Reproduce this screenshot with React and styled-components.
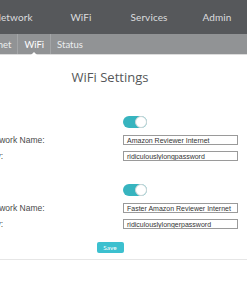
import React from "react";
import styled, { createGlobalStyle } from "styled-components";

const Global = createGlobalStyle`
  html, body { margin: 0; padding: 0; background: #ffffff; }
  body { width: 247px; height: 296px; overflow: hidden; font-family: "Liberation Sans", Arial, sans-serif; }
`;

const Page = styled.div`
  width: 247px;
  height: 296px;
  overflow: hidden;
  background: #fff;
`;

const TopBar = styled.nav`
  height: 34px;
  background: #56585b;
  display: flex;
  align-items: center;
  margin-left: -21px;
`;

const TopItem = styled.div`
  flex: 0 0 68px;
  text-align: center;
  color: #dcdddf;
  font-family: Lato, "Open Sans", sans-serif;
  font-size: 10px;
  letter-spacing: 0.1px;
`;

const SubBar = styled.div`
  height: 20px;
  background: #919395;
  display: flex;
  align-items: center;
  border-bottom: 1px solid #dcdcdc;
  margin-left: -28px;
`;

const SubItem = styled.div`
  position: relative;
  height: 20px;
  display: flex;
  align-items: center;
  padding: 0 6px;
  color: ${(p) => (p.$active ? "#ffffff" : "#eceeef")};
  font-family: Lato, "Open Sans", sans-serif;
  font-size: 9.5px;
  & + & { border-left: 1px solid #a3a5a7; }
`;

const Notch = styled.span`
  position: absolute;
  left: 50%;
  bottom: -1px;
  margin-left: -3px;
  width: 0;
  height: 0;
  border-left: 3px solid transparent;
  border-right: 3px solid transparent;
  border-bottom: 3px solid #ffffff;
`;

const Title = styled.h1`
  margin: 14px 0 0;
  width: 220px;
  text-align: center;
  font-family: "Open Sans", Lato, sans-serif;
  font-weight: 400;
  font-size: 13px;
  line-height: 16px;
  color: #555759;
`;

const Form = styled.div`
  margin: 31px 0 0 -14px;
  display: flex;
  flex-direction: column;
  gap: 23px;
`;

const Group = styled.div`
  display: grid;
  grid-template-columns: 137px 115px;
  grid-auto-rows: auto;
  row-gap: 6px;
`;

const ToggleRow = styled.div`
  grid-column: 2;
  margin-bottom: 1px;
`;

const Toggle = styled.div`
  position: relative;
  width: 24px;
  height: 12px;
  border-radius: 6px;
  background: #37b4bf;
`;

const Knob = styled.span`
  position: absolute;
  right: 0;
  top: 0;
  width: 12px;
  height: 12px;
  box-sizing: border-box;
  border-radius: 50%;
  background: #ffffff;
  border: 1px solid #cfd6d7;
`;

const Label = styled.div`
  height: 10px;
  display: flex;
  align-items: center;
  font-size: 8.5px;
  color: #4a4a4a;
  white-space: nowrap;
`;

const Input = styled.div`
  height: 10px;
  box-sizing: border-box;
  border: 1px solid #9a9a9a;
  background: #fff;
  display: flex;
  align-items: center;
  padding-left: 3px;
  font-size: 7px;
  color: #333;
  white-space: nowrap;
  overflow: hidden;
`;

const SaveRow = styled.div`
  margin-top: 13px;
  width: 220px;
  display: flex;
  justify-content: center;
`;

const SaveButton = styled.button`
  width: 27px;
  height: 11px;
  padding: 0;
  border: none;
  border-radius: 2px;
  background: #3cc0cf;
  color: #ffffff;
  font-family: Lato, "Open Sans", sans-serif;
  font-size: 6.5px;
  line-height: 11px;
`;

const Rule = styled.hr`
  margin: 6px 0 0;
  border: none;
  border-top: 1px solid #e6e6e6;
`;

const networks = [
  { name: "Amazon Reviewer Internet", key: "ridiculouslylongpassword" },
  { name: "Faster Amazon Reviewer Internet", key: "ridiculouslylongerpassword" },
];

export default function App() {
  return (
    <Page>
      <Global />
      <TopBar>
        <TopItem>Network</TopItem>
        <TopItem>WiFi</TopItem>
        <TopItem>Services</TopItem>
        <TopItem>Admin</TopItem>
      </TopBar>
      <SubBar>
        <SubItem>Internet</SubItem>
        <SubItem $active>
          WiFi
          <Notch />
        </SubItem>
        <SubItem>Status</SubItem>
      </SubBar>
      <Title>WiFi Settings</Title>
      <Form>
        {networks.map((n) => (
          <Group key={n.name}>
            <ToggleRow>
              <Toggle>
                <Knob />
              </Toggle>
            </ToggleRow>
            <Label>Network Name:</Label>
            <Input>{n.name}</Input>
            <Label>Key:</Label>
            <Input>{n.key}</Input>
          </Group>
        ))}
      </Form>
      <SaveRow>
        <SaveButton>Save</SaveButton>
      </SaveRow>
      <Rule />
    </Page>
  );
}
